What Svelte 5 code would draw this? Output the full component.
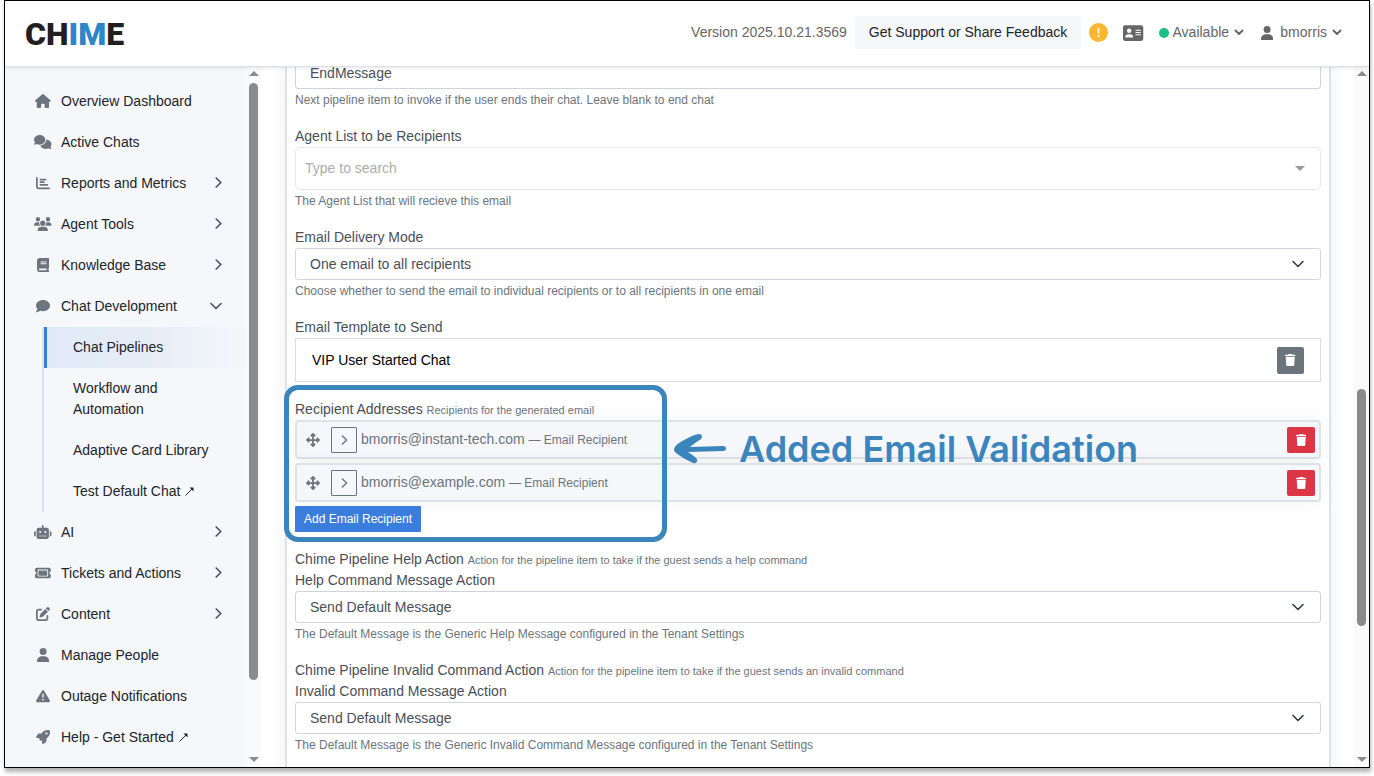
<script>
	const icons = {
		house: { w: 576, d: 'M575.8 255.5c0 18-15 32.1-32 32.1l-32 0 .7 160.2c0 2.7-.2 5.4-.5 8.1l0 16.2c0 22.1-17.9 40-40 40l-16 0c-1.1 0-2.2 0-3.3-.1c-1.4 .1-2.8 .1-4.2 .1L416 512l-24 0c-22.1 0-40-17.9-40-40l0-24 0-64c0-17.7-14.3-32-32-32l-64 0c-17.7 0-32 14.3-32 32l0 64 0 24c0 22.1-17.9 40-40 40l-24 0-31.9 0c-1.5 0-3-.1-4.5-.2c-1.2 .1-2.4 .2-3.6 .2l-16 0c-22.1 0-40-17.9-40-40l0-112c0-.9 0-1.9 .1-2.8l0-69.7-32 0c-18 0-32-14-32-32.1c0-9 3-17 10-24L266.4 8c7-7 15-8 22-8s15 2 21 7L564.8 231.5c8 7 12 15 11 24z' },
		comments: { w: 640, d: 'M208 352c114.9 0 208-78.8 208-176S322.9 0 208 0S0 78.8 0 176c0 38.6 14.7 74.3 39.6 103.4c-3.5 9.4-8.7 17.7-14.2 24.7c-4.8 6.2-9.7 11-13.3 14.3c-1.8 1.6-3.3 2.9-4.3 3.7c-.5 .4-.9 .7-1.1 .8l-.2 .2C1 327.2-1.4 334.4 .8 340.9S9.1 352 16 352c21.8 0 43.8-5.6 62.1-12.5c9.2-3.5 17.8-7.4 25.2-11.4C134.1 343.3 169.8 352 208 352zM448 176c0 112.3-99.1 196.9-216.5 207C255.8 457.4 336.4 512 432 512c38.2 0 73.9-8.7 104.7-23.9c7.5 4 16 7.9 25.2 11.4c18.3 6.9 40.3 12.5 62.1 12.5c6.9 0 13.1-4.5 15.2-11.1c2.1-6.6-.2-13.8-5.8-17.9l-.2-.2c-.2-.2-.6-.4-1.1-.8c-1-.8-2.5-2-4.3-3.7c-3.6-3.3-8.5-8.1-13.3-14.3c-5.5-7-10.7-15.4-14.2-24.7c24.9-29 39.6-64.7 39.6-103.4c0-92.8-84.9-168.9-192.6-175.5c.4 5.1 .6 10.3 .6 15.5z' },
		chart: { w: 512, d: 'M32 32c17.7 0 32 14.3 32 32V400c0 8.8 7.2 16 16 16H480c17.7 0 32 14.3 32 32s-14.3 32-32 32H80c-44.2 0-80-35.8-80-80V64C0 46.3 14.3 32 32 32zm96 96c0-17.7 14.3-32 32-32l192 0c17.7 0 32 14.3 32 32s-14.3 32-32 32H160c-17.7 0-32-14.3-32-32zm32 64H288c17.7 0 32 14.3 32 32s-14.3 32-32 32H160c-17.7 0-32-14.3-32-32s14.3-32 32-32zm0 96H416c17.7 0 32 14.3 32 32s-14.3 32-32 32H160c-17.7 0-32-14.3-32-32s14.3-32 32-32z' },
		users: { w: 640, d: 'M144 0a80 80 0 1 1 0 160A80 80 0 1 1 144 0zM512 0a80 80 0 1 1 0 160A80 80 0 1 1 512 0zM0 298.7C0 239.8 47.8 192 106.7 192h42.7c15.9 0 31 3.5 44.6 9.7c-1.3 7.2-1.9 14.7-1.9 22.3c0 38.2 16.8 72.5 43.3 96c-.2 0-.4 0-.7 0H21.3C9.6 320 0 310.4 0 298.7zM405.3 320c-.2 0-.4 0-.7 0c26.6-23.5 43.3-57.8 43.3-96c0-7.6-.7-15-1.9-22.3c13.6-6.3 28.7-9.7 44.6-9.7h42.7C592.2 192 640 239.8 640 298.7c0 11.8-9.6 21.3-21.3 21.3H405.3zM224 224a96 96 0 1 1 192 0 96 96 0 1 1 -192 0zM128 485.3C128 411.7 187.7 352 261.3 352H378.7C452.3 352 512 411.7 512 485.3c0 14.7-11.9 26.7-26.7 26.7H154.7c-14.7 0-26.7-11.9-26.7-26.7z' },
		book: { w: 448, d: 'M96 0C43 0 0 43 0 96V416c0 53 43 96 96 96H384h32c17.7 0 32-14.3 32-32s-14.3-32-32-32V384c17.7 0 32-14.3 32-32V32c0-17.7-14.3-32-32-32H384 96zm0 384H352v64H96c-17.7 0-32-14.3-32-32s14.3-32 32-32zm32-240c0-8.8 7.2-16 16-16H336c8.8 0 16 7.2 16 16s-7.2 16-16 16H144c-8.8 0-16-7.2-16-16zm16 48H336c8.8 0 16 7.2 16 16s-7.2 16-16 16H144c-8.8 0-16-7.2-16-16s7.2-16 16-16z' },
		comment: { w: 512, d: 'M512 240c0 114.9-114.6 208-256 208c-37.1 0-72.3-6.4-104.1-17.9c-11.9 8.7-31.3 20.6-54.3 30.6C73.6 471.1 44.7 480 16 480c-6.5 0-12.3-3.9-14.8-9.9c-2.5-6-1.1-12.8 3.4-17.4l.3-.3c.3-.3 .7-.7 1.3-1.4c1.1-1.2 2.8-3.1 4.9-5.7c4.1-5 9.6-12.4 15.2-21.6c10-16.6 19.5-38.4 21.4-62.9C17.7 326.8 0 285.1 0 240C0 125.1 114.6 32 256 32s256 93.1 256 208z' },
		robot: { w: 640, d: 'M320 0c17.7 0 32 14.3 32 32V96H472c39.8 0 72 32.2 72 72V440c0 39.8-32.2 72-72 72H168c-39.8 0-72-32.2-72-72V168c0-39.8 32.2-72 72-72H288V32c0-17.7 14.3-32 32-32zM208 384c-8.8 0-16 7.2-16 16s7.2 16 16 16h32c8.8 0 16-7.2 16-16s-7.2-16-16-16H208zm96 0c-8.8 0-16 7.2-16 16s7.2 16 16 16h32c8.8 0 16-7.2 16-16s-7.2-16-16-16H304zm96 0c-8.8 0-16 7.2-16 16s7.2 16 16 16h32c8.8 0 16-7.2 16-16s-7.2-16-16-16H400zM264 256a40 40 0 1 0-80 0 40 40 0 1 0 80 0zm152 40a40 40 0 1 0 0-80 40 40 0 1 0 0 80zM48 224H64V416H48c-26.5 0-48-21.5-48-48V272c0-26.5 21.5-48 48-48zm544 0c26.5 0 48 21.5 48 48v96c0 26.5-21.5 48-48 48H576V224h16z' },
		ticket: { w: 576, d: 'M64 64C28.7 64 0 92.7 0 128v64c0 8.8 7.4 15.7 15.7 18.6C34.5 217.1 48 235 48 256s-13.5 38.9-32.3 45.4C7.4 304.3 0 311.2 0 320v64c0 35.3 28.7 64 64 64H512c35.3 0 64-28.7 64-64V320c0-8.8-7.4-15.7-15.7-18.6C541.5 294.9 528 277 528 256s13.5-38.9 32.3-45.4c8.3-2.9 15.7-9.8 15.7-18.6V128c0-35.3-28.7-64-64-64H64zm64 112l0 160c0 8.8 7.2 16 16 16H432c8.8 0 16-7.2 16-16V176c0-8.8-7.2-16-16-16H144c-8.8 0-16 7.2-16 16zM96 160c0-17.7 14.3-32 32-32H448c17.7 0 32 14.3 32 32V352c0 17.7-14.3 32-32 32H128c-17.7 0-32-14.3-32-32V160z' },
		pen: { w: 512, d: 'M471.6 21.7c-21.9-21.9-57.3-21.9-79.2 0L362.3 51.7l97.9 97.9 30.1-30.1c21.9-21.9 21.9-57.3 0-79.2L471.6 21.7zm-299.2 220c-6.1 6.1-10.8 13.6-13.5 21.9l-29.6 88.8c-2.9 8.6-.6 18.1 5.8 24.6s15.9 8.7 24.6 5.8l88.8-29.6c8.2-2.7 15.7-7.4 21.9-13.5L437.7 172.3 339.7 74.3 172.4 241.7zM96 64C43 64 0 107 0 160V416c0 53 43 96 96 96H352c53 0 96-43 96-96V320c0-17.7-14.3-32-32-32s-32 14.3-32 32v96c0 17.7-14.3 32-32 32H96c-17.7 0-32-14.3-32-32V160c0-17.7 14.3-32 32-32h96c17.7 0 32-14.3 32-32s-14.3-32-32-32H96z' },
		user: { w: 448, d: 'M224 256A128 128 0 1 0 224 0a128 128 0 1 0 0 256zm-45.7 48C79.8 304 0 383.8 0 482.3C0 498.7 13.3 512 29.7 512H418.3c16.4 0 29.7-13.3 29.7-29.7C448 383.8 368.2 304 269.7 304H178.3z' },
		warning: { w: 512, d: 'M256 32c14.2 0 27.3 7.5 34.5 19.8l216 368c7.3 12.4 7.3 27.7 .2 40.1S486.3 480 472 480H40c-14.3 0-27.6-7.7-34.7-20.1s-7-27.8 .2-40.1l216-368C228.7 39.5 241.8 32 256 32zm0 128c-13.3 0-24 10.7-24 24V296c0 13.3 10.7 24 24 24s24-10.7 24-24V184c0-13.3-10.7-24-24-24zm32 224a32 32 0 1 0-64 0 32 32 0 1 0 64 0z' },
		rocket: { w: 512, d: 'M156.6 384.9L125.7 354c-8.5-8.5-11.5-20.8-7.7-32.2c3-8.9 7-20.5 11.8-33.8L24 288c-8.6 0-16.6-4.6-20.9-12.1s-4.2-16.7 .2-24.1l52.5-88.5c13-21.9 36.5-35.3 61.9-35.3l82.3 0c2.4-4 4.8-7.7 7.2-11.3C289.1-4.1 411.1-8.1 483.9 5.3c11.6 2.1 20.6 11.2 22.8 22.8c13.4 72.9 9.3 194.8-111.4 276.7c-3.5 2.4-7.3 4.8-11.3 7.2v82.3c0 25.4-13.4 49-35.3 61.9l-88.5 52.5c-7.4 4.4-16.6 4.5-24.1 .2s-12.1-12.2-12.1-20.9V380.8c-14.1 4.9-26.4 8.9-35.7 11.9c-11.2 3.6-23.4 .5-31.8-7.8zM384 168a40 40 0 1 0 0-80 40 40 0 1 0 0 80z' },
		card: { w: 576, d: 'M64 32C28.7 32 0 60.7 0 96V416c0 35.3 28.7 64 64 64H512c35.3 0 64-28.7 64-64V96c0-35.3-28.7-64-64-64H64zm80 256h64c44.2 0 80 35.8 80 80c0 8.8-7.2 16-16 16H80c-8.8 0-16-7.2-16-16c0-44.2 35.8-80 80-80zm-32-96a64 64 0 1 1 128 0 64 64 0 1 1 -128 0zm256-32H496c8.8 0 16 7.2 16 16s-7.2 16-16 16H368c-8.8 0-16-7.2-16-16s7.2-16 16-16zm0 64H496c8.8 0 16 7.2 16 16s-7.2 16-16 16H368c-8.8 0-16-7.2-16-16s7.2-16 16-16zm0 64H496c8.8 0 16 7.2 16 16s-7.2 16-16 16H368c-8.8 0-16-7.2-16-16s7.2-16 16-16z' },
		alert: { w: 512, d: 'M256 512A256 256 0 1 0 256 0a256 256 0 1 0 0 512zm0-384c13.3 0 24 10.7 24 24V264c0 13.3-10.7 24-24 24s-24-10.7-24-24V152c0-13.3 10.7-24 24-24zM224 352a32 32 0 1 1 64 0 32 32 0 1 1 -64 0z' },
		move: { w: 512, d: 'M278.6 9.4c-12.5-12.5-32.8-12.5-45.3 0l-64 64c-9.2 9.2-11.9 22.9-6.9 34.9s16.6 19.8 29.6 19.8h32v96H128V192c0-12.9-7.8-24.6-19.8-29.6s-25.7-2.2-34.9 6.9l-64 64c-12.5 12.5-12.5 32.8 0 45.3l64 64c9.2 9.2 22.9 11.9 34.9 6.9s19.8-16.6 19.8-29.6V288h96v96H192c-12.9 0-24.6 7.8-29.6 19.8s-2.2 25.7 6.9 34.9l64 64c12.5 12.5 32.8 12.5 45.3 0l64-64c9.2-9.2 11.9-22.9 6.9-34.9s-16.6-19.8-29.6-19.8H288V288h96v32c0 12.9 7.8 24.6 19.8 29.6s25.7 2.2 34.9-6.9l64-64c12.5-12.5 12.5-32.8 0-45.3l-64-64c-9.2-9.2-22.9-11.9-34.9-6.9s-19.8 16.6-19.8 29.6v32H288V128h32c12.9 0 24.6-7.8 29.6-19.8s2.2-25.7-6.9-34.9l-64-64z' },
		trash: { w: 448, d: 'M135.2 17.7L128 32H32C14.3 32 0 46.3 0 64S14.3 96 32 96H416c17.7 0 32-14.3 32-32s-14.3-32-32-32H320l-7.2-14.3C307.4 6.8 296.3 0 284.2 0H163.8c-12.1 0-23.2 6.8-28.6 17.7zM416 128H32L53.2 467c1.6 25.3 22.6 45 47.9 45H346.9c25.3 0 46.3-19.7 47.9-45L416 128z' }
	};

	const nav = [
		{ label: 'Overview Dashboard', icon: 'house' },
		{ label: 'Active Chats', icon: 'comments' },
		{ label: 'Reports and Metrics', icon: 'chart', group: true },
		{ label: 'Agent Tools', icon: 'users', group: true },
		{ label: 'Knowledge Base', icon: 'book', group: true },
		{
			label: 'Chat Development',
			icon: 'comment',
			group: true,
			children: [
				{ label: 'Chat Pipelines', active: true },
				{ label: 'Workflow and Automation' },
				{ label: 'Adaptive Card Library' },
				{ label: 'Test Default Chat', external: true }
			]
		},
		{ label: 'AI', icon: 'robot', group: true },
		{ label: 'Tickets and Actions', icon: 'ticket', group: true },
		{ label: 'Content', icon: 'pen', group: true },
		{ label: 'Manage People', icon: 'user' },
		{ label: 'Outage Notifications', icon: 'warning' },
		{ label: 'Help - Get Started', icon: 'rocket', external: true }
	];

	const actions = [
		{
			id: 'help-action',
			title: 'Chime Pipeline Help Action',
			note: 'Action for the pipeline item to take if the guest sends a help command',
			label: 'Help Command Message Action',
			help: 'The Default Message is the Generic Help Message configured in the Tenant Settings'
		},
		{
			id: 'invalid-action',
			title: 'Chime Pipeline Invalid Command Action',
			note: 'Action for the pipeline item to take if the guest sends an invalid command',
			label: 'Invalid Command Message Action',
			help: 'The Default Message is the Generic Invalid Command Message configured in the Tenant Settings'
		}
	];

	let recipients = $state(['bmorris@instant-tech.com', 'bmorris@example.com']);
	let endMessage = $state('EndMessage');

	function addRecipient() {
		recipients.push('');
	}

	/** @param {number} i */
	function removeRecipient(i) {
		recipients.splice(i, 1);
	}
</script>

{#snippet icon(name, size)}
	<svg class="icon" height={size} width={(size * icons[name].w) / 512} viewBox="0 0 {icons[name].w} 512" aria-hidden="true">
		<path fill="currentColor" fill-rule="evenodd" d={icons[name].d} />
	</svg>
{/snippet}

{#snippet external()}
	<svg class="external" width="9" height="9" viewBox="0 0 9 9" aria-hidden="true">
		<path d="M0.5 8.5L7.5 1.5" fill="none" stroke="currentColor" />
		<path d="M4.5 0.5H8.5V4.5Z" fill="currentColor" />
	</svg>
{/snippet}

{#snippet chevronDown()}
	<svg class="chevron" width="12" height="8" viewBox="0 0 12 8" aria-hidden="true">
		<path d="M1 1.5L6 6.5L11 1.5" fill="none" stroke="currentColor" stroke-width="1.6" stroke-linecap="round" stroke-linejoin="round" />
	</svg>
{/snippet}

{#snippet chevronRight()}
	<svg class="chevron" width="7" height="11" viewBox="0 0 7 11" aria-hidden="true">
		<path d="M1.2 1L5.8 5.5L1.2 10" fill="none" stroke="currentColor" stroke-width="1.6" stroke-linecap="round" stroke-linejoin="round" />
	</svg>
{/snippet}

{#snippet caret()}
	<svg class="caret" width="10" height="7" viewBox="0 0 10 7" aria-hidden="true">
		<path d="M1.5 1.5L5 5L8.5 1.5" fill="none" stroke="currentColor" stroke-width="2" stroke-linecap="round" stroke-linejoin="round" />
	</svg>
{/snippet}

{#snippet scrollbar(before, size, after)}
	<div class="scrollbar" aria-hidden="true">
		<span class="arrow up"></span>
		<span style:flex-grow={before}></span>
		<span class="thumb" style:flex-grow={size}></span>
		<span style:flex-grow={after}></span>
		<span class="arrow down"></span>
	</div>
{/snippet}

<div class="app">
	<header>
		<a class="logo" href="/" aria-label="Chime">CH<span>IM</span>E</a>
		<div class="tools">
			<span class="version">Version 2025.10.21.3569</span>
			<button class="feedback">Get Support or Share Feedback</button>
			<button class="plain alert" aria-label="Alerts">{@render icon('alert', 19)}</button>
			<button class="plain card" aria-label="Contact card">{@render icon('card', 18)}</button>
			<button class="plain status"><span class="dot"></span>Available{@render caret()}</button>
			<button class="plain account">{@render icon('user', 14)}bmorris{@render caret()}</button>
		</div>
	</header>

	<div class="body">
		<nav>
			<ul>
				{#each nav as item}
					<li>
						<a class="item" href="#{item.icon}">
							<span class="slot">{@render icon(item.icon, 14)}</span>
							<span>{item.label}{#if item.external}{@render external()}{/if}</span>
							{#if item.group}
								<span class="toggle">
									{#if item.children}{@render chevronDown()}{:else}{@render chevronRight()}{/if}
								</span>
							{/if}
						</a>
						{#if item.children}
							<ul class="sub">
								{#each item.children as child}
									<li>
										<a class:active={child.active} href="#child">{child.label}{#if child.external}{@render external()}{/if}</a>
									</li>
								{/each}
							</ul>
						{/if}
					</li>
				{/each}
			</ul>
		</nav>
		{@render scrollbar(0, 597, 77)}

		<main>
			<form class="panel" onsubmit={(e) => e.preventDefault()}>
				<div class="field">
					<input class="control" type="text" aria-label="End message item" bind:value={endMessage} />
					<p class="help">Next pipeline item to invoke if the user ends their chat. Leave blank to end chat</p>
				</div>

				<div class="field">
					<label for="agent-list">Agent List to be Recipients</label>
					<div class="combo">
						<input id="agent-list" type="text" placeholder="Type to search" />
						<span class="arrow down"></span>
					</div>
					<p class="help">The Agent List that will recieve this email</p>
				</div>

				<div class="field">
					<label for="delivery">Email Delivery Mode</label>
					<div class="select">
						<select id="delivery" class="control">
							<option>One email to all recipients</option>
							<option>Individual emails</option>
						</select>
						{@render chevronDown()}
					</div>
					<p class="help">Choose whether to send the email to individual recipients or to all recipients in one email</p>
				</div>

				<div class="field">
					<span class="label">Email Template to Send</span>
					<div class="template">
						<span>VIP User Started Chat</span>
						<button class="trash" type="button" aria-label="Remove template">{@render icon('trash', 12)}</button>
					</div>
				</div>

				<div class="field recipients">
					<span class="label">Recipient Addresses <small>Recipients for the generated email</small></span>
					<div class="rows">
						{#each recipients as address, i}
							<div class="row">
								<span class="drag">{@render icon('move', 14)}</span>
								<button class="expand" type="button" aria-label="Expand">{@render chevronRight()}</button>
								<span class="address">{address} <small>— Email Recipient</small></span>
								<button class="trash danger" type="button" aria-label="Remove recipient" onclick={() => removeRecipient(i)}>
									{@render icon('trash', 12)}
								</button>
							</div>
						{/each}
						<button class="add" type="button" onclick={addRecipient}>Add Email Recipient</button>
					</div>

					<div class="callout"></div>
					<div class="annotation">
						<svg width="54" height="32" viewBox="0 0 54 32" aria-hidden="true">
							<path d="M1 17C1 14 3 12 6 10C13 6 19 2 26 1C29 1 30 4 28 6C24 9 20 11 17 14C28 14 39 13 50 13C54 13 54 18 50 18L15 19C18 21 21 23 23 25C26 28 23 31 20 30C14 27 8 24 3 20C2 19 1 18 1 17Z" fill="currentColor" />
						</svg>
						<span>Added Email Validation</span>
					</div>
				</div>

				{#each actions as a}
					<div class="field">
						<span class="label">{a.title} <small>{a.note}</small></span>
						<label for={a.id}>{a.label}</label>
						<div class="select">
							<select id={a.id} class="control">
								<option>Send Default Message</option>
							</select>
							{@render chevronDown()}
						</div>
						<p class="help">{a.help}</p>
					</div>
				{/each}
			</form>
		</main>
		{@render scrollbar(306, 237, 131)}
	</div>
</div>

<style>
	:global(body) {
		background: #fff;
	}
	.app {
		--line: #dee2e6;
		--muted: #6c757d;
		--tint: #f5f7fb;
		--mark: #3b85bd;
		box-sizing: border-box;
		display: flex;
		flex-direction: column;
		height: calc(100vh - 8px);
		margin: 0 4px 8px;
		border: 1px solid #000;
		box-shadow: 1px 4px 4px rgba(0, 0, 0, 0.3);
		font-family: "Liberation Sans", Arial, sans-serif;
		font-size: 14px;
		line-height: 21px;
		color: #495057;
		overflow: hidden;
	}
	button,
	input,
	select {
		box-sizing: border-box;
		margin: 0;
		font: inherit;
		color: inherit;
	}
	button {
		display: inline-flex;
		align-items: center;
		justify-content: center;
		padding: 0;
		border: 0;
		cursor: pointer;
	}
	a {
		color: inherit;
		text-decoration: none;
	}
	svg {
		flex: none;
	}
	small {
		line-height: 1;
	}

	header {
		position: relative;
		z-index: 1;
		display: flex;
		align-items: center;
		justify-content: space-between;
		box-sizing: border-box;
		flex: none;
		height: 66px;
		padding: 0 27px 2px 20px;
		border-bottom: 1px solid #dcdfe8;
		background: #fff;
		box-shadow: 0 1px 4px rgba(0, 0, 0, 0.1);
	}
	.logo {
		padding-top: 2px;
		font-family: Roboto, sans-serif;
		font-size: 32px;
		font-weight: 900;
		line-height: 32px;
		color: #231f20;
	}
	.logo span {
		color: #2b87c8;
	}
	.tools {
		display: flex;
		align-items: center;
		color: #666;
	}
	.feedback {
		height: 33px;
		margin: 0 8px;
		padding: 0 14px;
		border-radius: 3px;
		background: var(--tint);
		color: #212529;
	}
	.plain {
		background: none;
	}
	.alert {
		margin-right: 15px;
		color: #fdb62f;
	}
	.card {
		margin-right: 15px;
	}
	.status {
		margin-right: 17px;
	}
	.account .icon {
		margin-right: 7px;
	}
	.dot {
		width: 10px;
		height: 10px;
		margin-right: 4px;
		border-radius: 50%;
		background: #1dbf84;
	}
	.caret {
		margin-left: 5px;
	}

	.body {
		display: flex;
		flex: 1;
		min-height: 0;
	}
	nav {
		box-sizing: border-box;
		flex: none;
		width: 241px;
		padding-top: 14px;
		background: var(--tint);
		color: #212529;
		overflow: hidden;
	}
	nav ul {
		margin: 0;
		padding: 0;
		list-style: none;
	}
	.item {
		display: flex;
		align-items: center;
		padding: 10px 24px 10px 29px;
	}
	.slot {
		display: flex;
		justify-content: center;
		width: 18px;
		margin-right: 9px;
		padding-bottom: 2px;
		color: var(--muted);
	}
	.toggle {
		display: flex;
		margin-left: auto;
		padding-bottom: 2px;
		color: #495057;
	}
	.external {
		margin-left: 5px;
	}
	nav .sub {
		margin-left: 37px;
		border-left: 2px solid var(--line);
	}
	.sub a {
		display: block;
		padding: 10px 32px 10px 26px;
		border-left: 3px solid transparent;
	}
	.sub a.active {
		border-left-color: #3b7ddd;
		background: linear-gradient(90deg, #e0eaf6, #e6ecf7 50%, var(--tint));
	}

	.scrollbar {
		box-sizing: border-box;
		display: flex;
		flex-direction: column;
		align-items: center;
		flex: none;
		width: 15px;
		padding: 4px 0 5px;
		background: #fafafa;
	}
	.thumb {
		width: 9px;
		border-radius: 5px;
		background: #8b8b8b;
	}
	.arrow {
		flex: none;
		border: 5px solid transparent;
	}
	.arrow.up {
		margin-bottom: 7px;
		border-top: 0;
		border-bottom-color: #8b8b8b;
	}
	.arrow.down {
		border-bottom: 0;
		border-top-color: #8b8b8b;
	}

	main {
		flex: 1;
		min-width: 0;
		padding: 0 23px 0 24px;
		background: #fff;
		overflow: hidden;
	}
	/* the form is scrolled part way, so its first control is cut off by the header */
	.panel {
		display: flex;
		flex-direction: column;
		gap: 17px;
		margin-top: -10px;
		padding: 0 8px 24px;
		border: 2px solid var(--line);
		border-top: 0;
		box-shadow: 0 0 20px rgba(0, 0, 0, 0.06);
	}
	.field {
		display: flex;
		flex-direction: column;
	}
	.help {
		margin: 2px 0 0;
		font-size: 12px;
		line-height: 18px;
		color: var(--muted);
	}
	.label small {
		font-size: 11px;
		color: var(--muted);
	}
	.control {
		width: 100%;
		height: 32px;
		padding: 0 14px;
		border: 1px solid #ced4da;
		border-radius: 3px;
		background: #fff;
		appearance: none;
	}
	.select {
		display: grid;
		align-items: center;
	}
	.select > :global(*) {
		grid-area: 1 / 1;
	}
	.select .chevron {
		justify-self: end;
		margin-right: 17px;
		color: #343a40;
		pointer-events: none;
	}
	.combo {
		display: flex;
		align-items: center;
		padding-right: 15px;
		border: 1px solid #e8e8e8;
		border-radius: 5px;
	}
	.combo input {
		flex: 1;
		height: 41px;
		padding: 0 9px 2px;
		border: 0;
		background: none;
		outline: none;
	}
	.combo input::placeholder {
		color: #adadad;
	}
	.combo .arrow {
		border-top-color: #999;
	}
	.template {
		box-sizing: border-box;
		display: flex;
		align-items: center;
		justify-content: space-between;
		height: 44px;
		padding: 0 16px;
		border: 1px solid #dcdcdc;
		color: #000;
	}
	.trash {
		width: 27px;
		height: 27px;
		border-radius: 2px;
		background: var(--muted);
		color: #fff;
	}
	.trash.danger {
		width: 28px;
		height: 26px;
		margin-left: auto;
		background: #dc3545;
	}

	.recipients {
		position: relative;
	}
	.rows {
		display: flex;
		flex-direction: column;
		align-items: flex-start;
		gap: 4px;
	}
	.row {
		box-sizing: border-box;
		display: flex;
		align-items: center;
		width: 100%;
		height: 39px;
		padding: 0 4px 0 9px;
		border: 2px solid var(--line);
		border-radius: 4px;
		background: var(--tint);
		box-shadow: 0 0 20px rgba(0, 0, 0, 0.05);
		color: var(--muted);
	}
	.drag {
		display: flex;
		margin-right: 11px;
	}
	.expand {
		width: 26px;
		height: 26px;
		margin-right: 4px;
		border: 1px solid var(--muted);
		border-radius: 1px;
		background: none;
	}
	.expand .chevron {
		height: 10px;
	}
	.address small {
		font-size: 12px;
	}
	.add {
		height: 26px;
		padding: 0 9px;
		border-radius: 1px;
		background: #3b7ddd;
		color: #fff;
		font-size: 12px;
	}
	/* highlight drawn over the recipient rows */
	.callout {
		position: absolute;
		top: -14px;
		bottom: -10px;
		left: -11px;
		box-sizing: border-box;
		width: 383px;
		border: 5px solid var(--mark);
		border-radius: 14px;
		pointer-events: none;
	}
	.annotation {
		position: absolute;
		top: 28px;
		left: 378px;
		display: flex;
		align-items: center;
		gap: 12px;
		font-family: Inter, sans-serif;
		font-size: 36px;
		font-weight: 600;
		line-height: 44px;
		color: var(--mark);
		white-space: nowrap;
		pointer-events: none;
	}
</style>
